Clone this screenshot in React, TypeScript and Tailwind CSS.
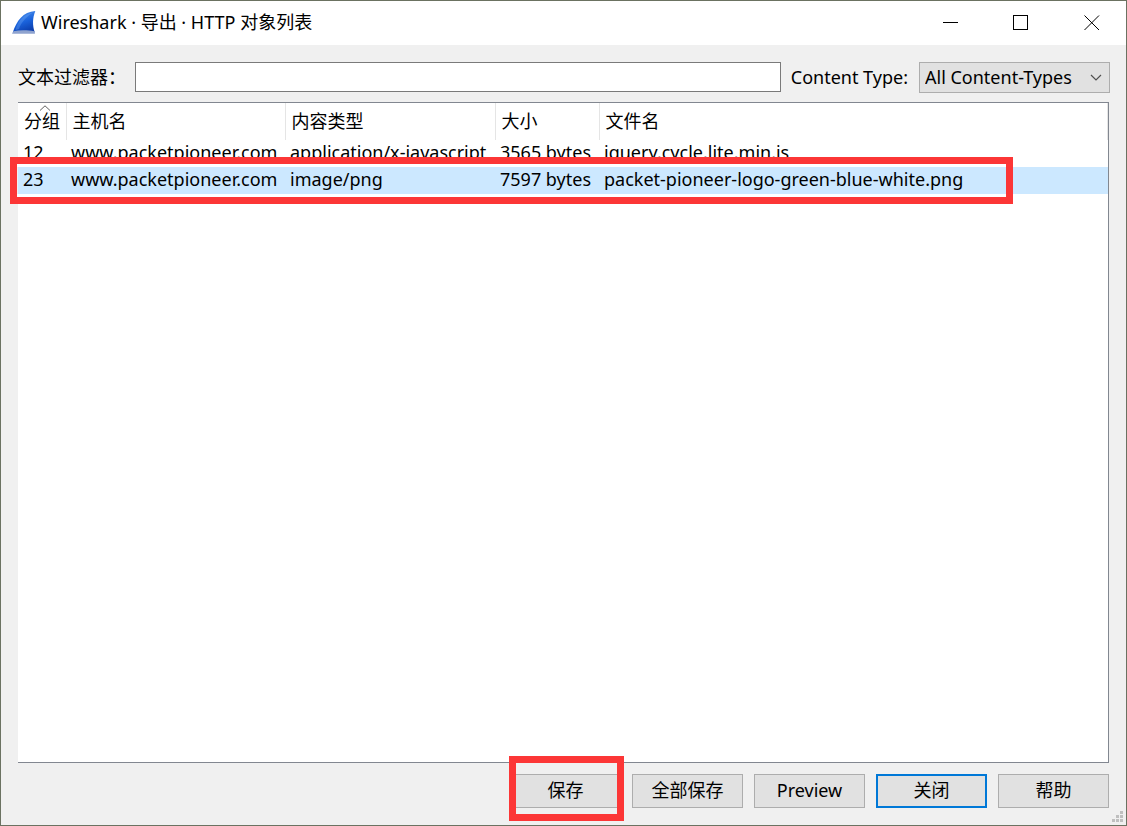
import { useState } from "react";

const columns = ["分组", "主机名", "内容类型", "大小", "文件名"];

const rows = [
  ["12", "www.packetpioneer.com", "application/x-javascript", "3565 bytes", "jquery.cycle.lite.min.js"],
  ["23", "www.packetpioneer.com", "image/png", "7597 bytes", "packet-pioneer-logo-green-blue-white.png"],
];

function SharkFin() {
  return (
    <svg className="h-6 w-6 shrink-0" viewBox="0 0 24 24" aria-hidden="true">
      <defs>
        <linearGradient id="fin" x1="0.3" y1="0" x2="0.7" y2="1">
          <stop offset="0" stopColor="#4f93ee" />
          <stop offset="0.5" stopColor="#1a63dc" />
          <stop offset="1" stopColor="#0a3aa8" />
        </linearGradient>
      </defs>
      <path d="M.8 21.500C4.500 10 11 .8 23.300 0C20.500 7 20.300 14 22.800 21.500Z" fill="url(#fin)" />
      <path d="M3.500 19C6 10 11.500 3.500 21 1.500C15.500 5 9 11 7 18Z" fill="#7fb4f7" opacity="0.3" />
      <path d="M0 22.800L1.300 20.200C8 19 16 19.200 22.300 20.200L23 22.800Z" fill="#8fa3cf" />
    </svg>
  );
}

function TitleBar() {
  return (
    <header className="flex h-11 shrink-0 items-center bg-white pr-5 pl-[11px]">
      <SharkFin />
      <h1 className="ml-[5px] flex-1 pb-0.5 text-lg leading-6">Wireshark · 导出 · HTTP 对象列表</h1>
      <div className="flex">
        <button type="button" aria-label="最小化" className="flex h-11 w-[70px] items-center justify-center">
          <svg className="h-4 w-4" viewBox="0 0 16 16" shapeRendering="crispEdges"><path d="M0 7.500H15" stroke="#000" /></svg>
        </button>
        <button type="button" aria-label="最大化" className="flex h-11 w-[70px] items-center justify-center">
          <svg className="h-4 w-4" viewBox="0 0 16 16" shapeRendering="crispEdges"><path d="M.5 .5H14.500V14.500H.5Z" stroke="#000" fill="none" /></svg>
        </button>
        <button type="button" aria-label="关闭窗口" className="flex h-11 w-[50px] items-center justify-end pr-1.5">
          <svg className="h-4 w-4" viewBox="0 0 16 16"><path d="M.5 .5L15 15M15 .5L.5 15" stroke="#000" /></svg>
        </button>
      </div>
    </header>
  );
}

const buttonStyle = "h-[34px] w-[111px] border border-[#adadad] bg-[#e1e1e1] pb-0.5 text-lg leading-6";

export default function App() {
  const [filter, setFilter] = useState("");
  const [selected, setSelected] = useState("23");

  return (
    <div className="relative flex min-h-screen flex-col border border-[#6b7261] bg-[#f0f0f0] font-['Noto_Sans','Noto_Sans_CJK_SC',sans-serif] text-lg text-black">
      <TitleBar />
      <main className="flex flex-1 flex-col px-[17px] pt-[17px] pb-[17px]">
        <div className="mb-[9px] flex items-center">
          <label htmlFor="filter" className="w-[117px] shrink-0 pb-0.5 leading-6">文本过滤器：</label>
          <input
            id="filter"
            value={filter}
            onChange={(e) => setFilter(e.target.value)}
            className="h-[30px] min-w-0 flex-1 self-start border border-[#7a7a7a] bg-white px-1 outline-none"
          />
          <label htmlFor="type" className="mr-[11px] ml-2.5 pb-0.5 whitespace-nowrap leading-6">Content Type:</label>
          <div className="relative -mr-px">
            <select
              id="type"
              className="block h-[31px] w-[191px] appearance-none rounded-none border border-[#adadad] bg-[#e1e1e1] pb-0.5 pl-[5px] leading-6 outline-none"
            >
              <option>All Content-Types</option>
            </select>
            <svg className="pointer-events-none absolute top-3 right-2 h-2 w-3" viewBox="0 0 12 8" fill="none" aria-hidden="true">
              <path d="M1 1L6 6L11 1" stroke="#505050" strokeWidth="1.200" />
            </svg>
          </div>
        </div>

        <div className="flex-1 border-t border-r border-b border-[#828790] bg-white">
          <table className="w-full table-fixed border-collapse text-left">
            <colgroup>
              <col className="w-[48px]" />
              <col className="w-[219px]" />
              <col className="w-[210px]" />
              <col className="w-[104px]" />
              <col />
            </colgroup>
            <thead>
              <tr className="h-[37px]">
                {columns.map((c, i) => (
                  <th key={c} className="relative border-r border-[#e5e5e5] p-0 pb-0.5 pl-1.5 font-normal whitespace-nowrap leading-6">
                    {i === 0 && (
                      <svg className="absolute top-0.5 left-[21px] h-1.5 w-3" viewBox="0 0 12 6" fill="none" aria-hidden="true">
                        <path d="M1 5.500L6 .8L11 5.500" stroke="#606060" />
                      </svg>
                    )}
                    {c}
                  </th>
                ))}
              </tr>
            </thead>
            <tbody>
              {rows.map((r) => (
                <tr
                  key={r[0]}
                  onClick={() => setSelected(r[0])}
                  className={selected === r[0] ? "relative h-[27px] bg-[#cce8ff]" : "h-[27px]"}
                >
                  {r.map((v, i) => (
                    <td key={i} className="p-0 pb-[3px] pl-[5px] whitespace-nowrap leading-6">
                      {v}
                      {i === 0 && selected === r[0] && (
                        <span className="pointer-events-none absolute -top-2.5 right-[95px] -bottom-2.5 -left-2 border-7 border-[#fc3636]">
                          <span className="block h-full border-t-3 border-b-3 border-white" />
                        </span>
                      )}
                    </td>
                  ))}
                </tr>
              ))}
            </tbody>
          </table>
        </div>

        <div className="mt-[11px] flex justify-end gap-[11px]">
          <div className="relative">
            <button type="button" className={buttonStyle}>保存</button>
            <span className="pointer-events-none absolute -top-[18px] -right-[3px] -bottom-[13px] -left-px border-7 border-[#fc3636]" />
          </div>
          <button type="button" className={buttonStyle}>全部保存</button>
          <button type="button" className={buttonStyle}>Preview</button>
          <button type="button" className="h-[34px] w-[111px] border-2 border-[#0078d7] bg-[#e1e1e1] pb-0.5 text-lg leading-6">关闭</button>
          <button type="button" className={buttonStyle}>帮助</button>
        </div>
      </main>
      <svg className="absolute right-[2px] bottom-[2px] h-3 w-3" viewBox="0 0 12 12" fill="#bfbfbf" shapeRendering="crispEdges" aria-hidden="true">
        <path d="M8 0h3v3h-3zM4 4h3v3h-3zM8 4h3v3h-3zM0 8h3v3h-3zM4 8h3v3h-3zM8 8h3v3h-3z" />
      </svg>
    </div>
  );
}
